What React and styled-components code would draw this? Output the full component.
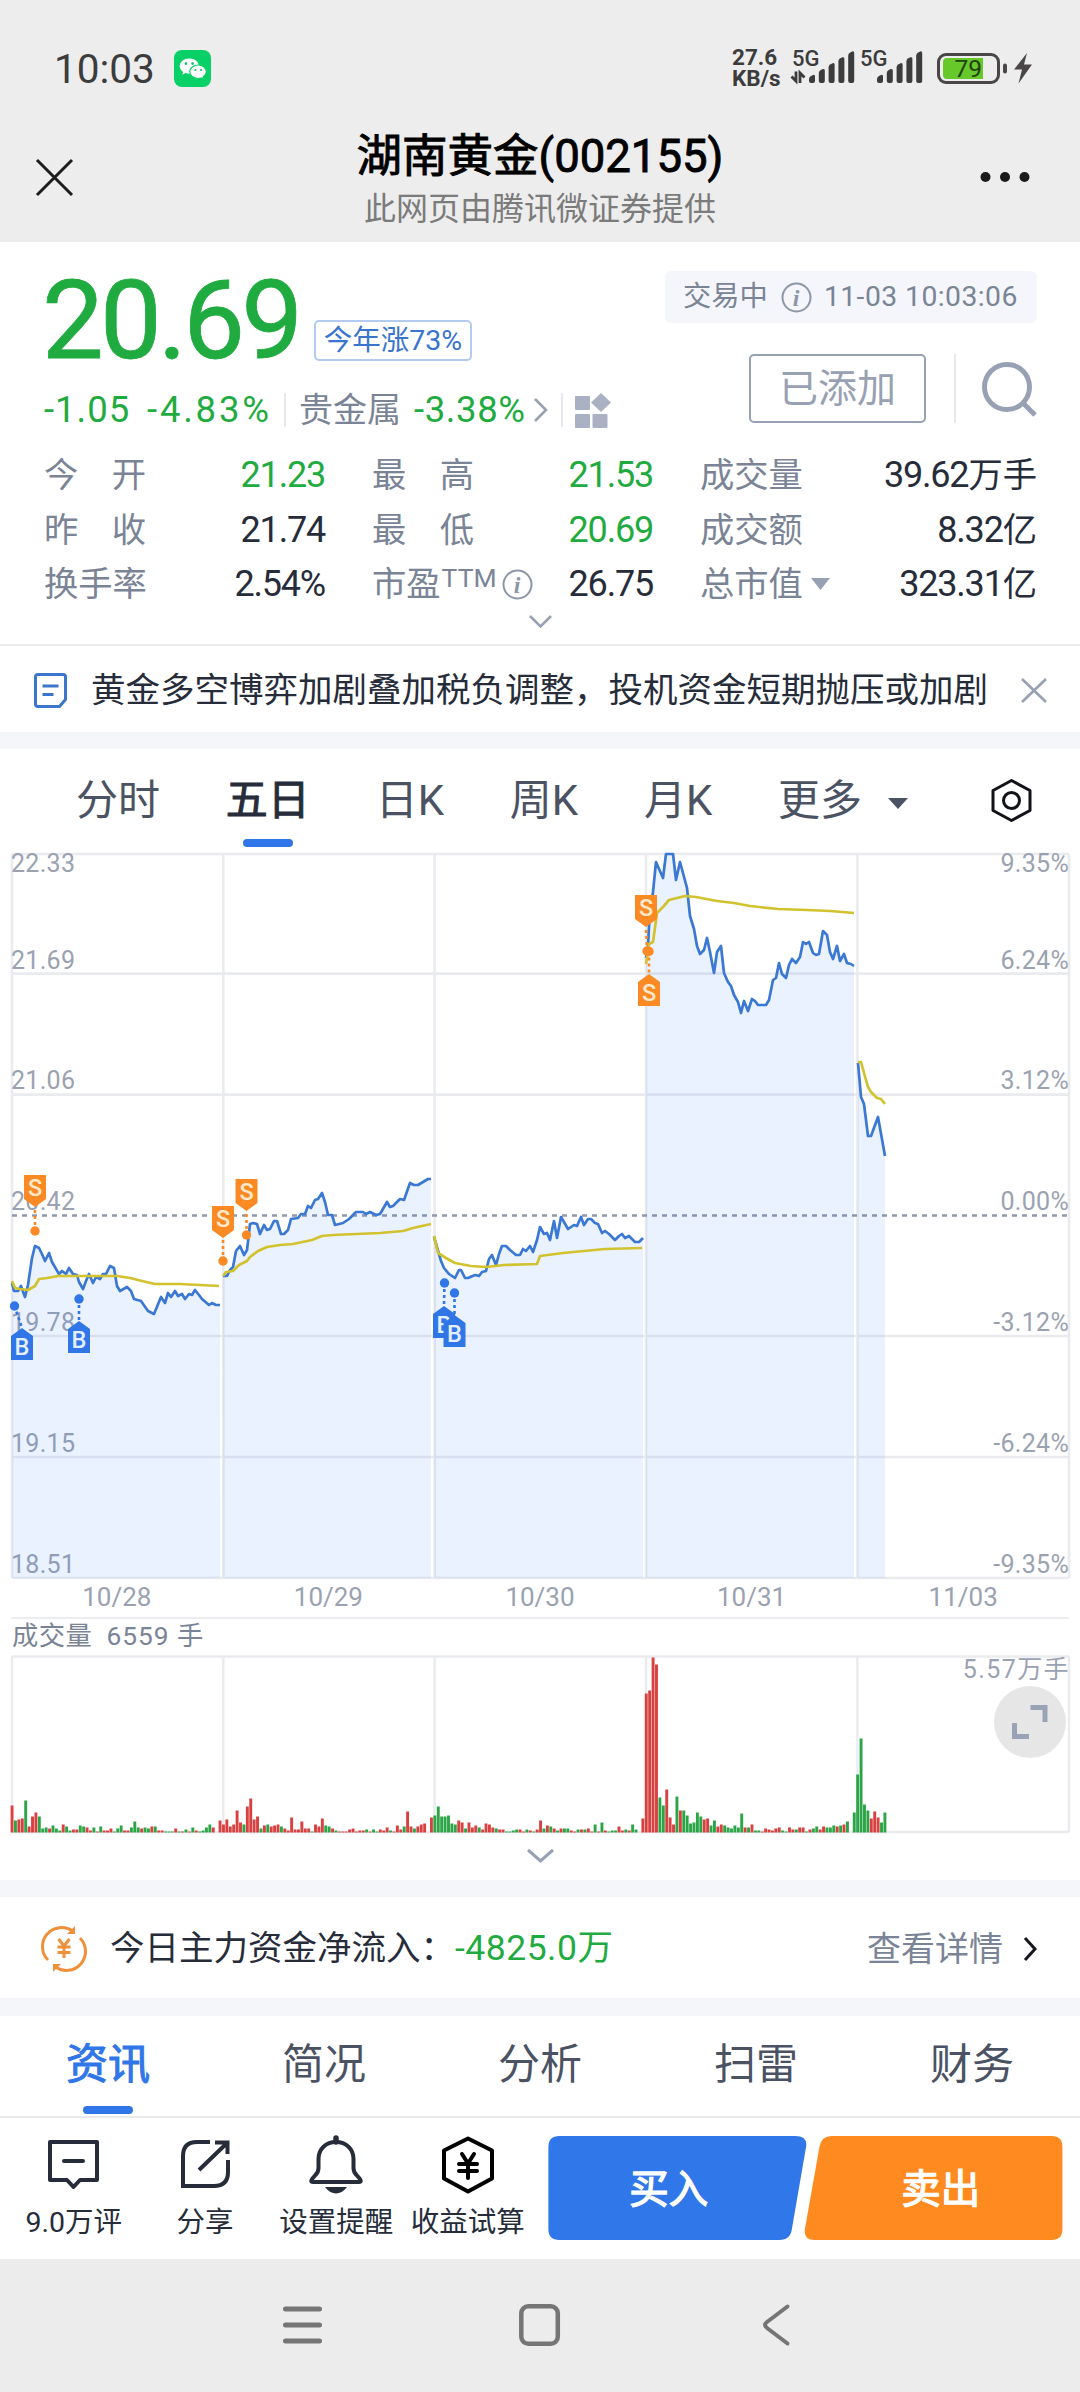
import React from "react";
import styled, { createGlobalStyle } from "styled-components";

const GlobalStyle = createGlobalStyle`
  * {
    box-sizing: border-box;
  }
  body {
    margin: 0;
    background: #fff;
    font-family: Roboto, "Noto Sans CJK SC", sans-serif;
  }
  svg {
    display: block;
    flex: none;
    overflow: visible;
  }
`;

const Screen = styled.div`
  display: flex;
  flex-direction: column;
  width: 1080px;
  height: 2392px;
  overflow: hidden;
  background: #fff;
  color: #262c3a;
  line-height: 1;
  white-space: nowrap;
`;

/* ---------- top of the phone ---------- */

const Top = styled.header`
  height: 242px;
  background: #ededed;
`;
const StatusBar = styled.div`
  display: flex;
  align-items: center;
  height: 133px;
  padding: 3px 47px 0 54px;
`;
const Clock = styled.span`
  width: 120px;
  padding-top: 2px;
  font-size: 40.5px;
  color: #3c3c3c;
`;
const Speed = styled.div`
  width: 58px;
  margin-left: auto;
  font-size: 22.5px;
  font-weight: 700;
  line-height: 21px;
  color: #3c3c3c;
`;
const BatteryWrap = styled.div`
  margin-left: 11px;
`;
const TitleBar = styled.div`
  display: flex;
  justify-content: space-between;
  padding: 0 50px 0 36px;
`;
const TitleSide = styled.div`
  display: flex;
  align-items: center;
  justify-content: ${(props) => (props.$right ? "flex-end" : "flex-start")};
  width: 60px;
  height: 38px;
  margin-top: 25px;
`;
const Titles = styled.div`
  display: flex;
  flex-direction: column;
  align-items: center;
  padding: 2px 0 0 14px;
`;
const Title = styled.h1`
  margin: 0;
  font-size: 45.5px;
  line-height: 44px;
  font-weight: 400;
  -webkit-text-stroke: 0.9px #000;
  color: #000;
`;
const SubTitle = styled.div`
  margin-top: 12px;
  font-size: 32px;
  line-height: 36px;
  color: #7b7b7b;
`;

/* ---------- quote ---------- */

const Quote = styled.section`
  height: 402px;
  padding: 0 43px 0 44px;
`;
const QuoteHead = styled.div`
  display: flex;
  justify-content: space-between;
  height: 205px;
`;
const PriceLine = styled.div`
  display: flex;
  align-items: flex-end;
  height: 119px;
`;
const Price = styled.div`
  width: 270px;
  margin-bottom: 1px;
  font-size: 110px;
  line-height: 78px;
  letter-spacing: -3.8px;
  text-indent: -2px;
  -webkit-text-stroke: 0.8px #1fab3f;
  color: #1fab3f;
`;
const YearBadge = styled.div`
  width: 158px;
  height: 41px;
  border: 2px solid #b3cbee;
  border-radius: 5px;
  font-size: 28.5px;
  line-height: 38px;
  text-align: center;
  color: #3974cf;
`;
const ChangeLine = styled.div`
  display: flex;
  align-items: center;
  height: 36px;
  margin-top: 31px;
  font-size: 36.5px;
  color: #1fab3f;
`;
const Change = styled.span`
  width: ${(props) => props.$width}px;
  letter-spacing: ${(props) => props.$spacing || 0}px;
`;
const Sector = styled.span`
  width: 115px;
  font-size: 34px;
  color: #7a8496;
`;
const Divider = styled.i`
  width: 2px;
  height: ${(props) => props.$height}px;
  margin: ${(props) => props.$margin};
  background: #e6e8ed;
`;
const QuoteSide = styled.div`
  display: flex;
  flex-direction: column;
  align-items: flex-end;
  padding-top: 29px;
`;
const TradeTag = styled.div`
  display: flex;
  align-items: center;
  width: 372px;
  height: 52px;
  padding: 0 18px;
  border-radius: 6px;
  background: #f4f6fb;
  font-size: 28.3px;
  color: #7a8496;
  svg {
    margin: 0 12px 0 13px;
  }
`;
const TradeTime = styled.span`
  letter-spacing: 0.45px;
`;
const Actions = styled.div`
  display: flex;
  align-items: center;
  margin-top: 31px;
`;
const AddedButton = styled.button`
  width: 177px;
  height: 69px;
  padding: 0;
  border: 2px solid #98a1b3;
  border-radius: 5px;
  background: none;
  font-family: inherit;
  font-size: 39px;
  line-height: 60px;
  color: #98a1b3;
`;
const Stats = styled.div`
  display: grid;
  grid-template-columns: 280px 280px 336px;
  grid-auto-rows: 54.5px;
  column-gap: 48px;
  padding-top: 1px;
`;
const Stat = styled.div`
  display: flex;
  align-items: center;
  justify-content: space-between;
`;
const StatLabel = styled.span`
  display: flex;
  align-items: center;
  justify-content: space-between;
  min-width: 102px;
  font-size: 34.3px;
  color: #7a8496;
`;
const StatValue = styled.span`
  font-size: 36px;
  letter-spacing: -1.2px;
  margin-right: -1px;
  color: ${(props) => (props.$down ? "#1fab3f" : "#262c3a")};
  b {
    font-size: 34.3px;
    font-weight: 400;
    letter-spacing: 0;
  }
`;
const Ttm = styled.small`
  margin: 0 5px 13px 1px;
  font-size: 26.5px;
`;
const Expand = styled.div`
  display: flex;
  justify-content: center;
  padding-top: ${(props) => props.$top}px;
  height: ${(props) => props.$height}px;
`;

/* ---------- news line ---------- */

const News = styled.section`
  display: flex;
  align-items: center;
  height: 88px;
  padding: 2px 33px 0 34px;
  border-top: 2px solid #e9ebef;
`;
const NewsText = styled.span`
  flex: 1;
  margin-left: 24px;
  font-size: 34.5px;
`;
const Band = styled.div`
  height: ${(props) => props.$height}px;
  background: #f4f6fa;
`;

/* ---------- period tabs ---------- */

const PeriodTabs = styled.nav`
  display: flex;
  align-items: center;
  gap: 65.8px;
  height: 103px;
  padding: 0 48px 0 76px;
`;
const Period = styled.div`
  position: relative;
  display: flex;
  align-items: center;
  gap: 26px;
  padding-top: 1px;
  font-size: 42px;
  -webkit-text-stroke: ${(props) => (props.$active ? "1px #262c3a" : "0")};
  color: ${(props) => (props.$active ? "#262c3a" : "#4a5263")};
  &:last-of-type {
    margin-right: auto;
  }
`;
const Underline = styled.i`
  position: absolute;
  left: 50%;
  bottom: ${(props) => props.$bottom}px;
  width: 50px;
  height: 8px;
  margin-left: -25px;
  border-radius: 4px;
  background: #3076e8;
`;

/* ---------- charts ---------- */

const ChartArea = styled.section`
  position: relative;
  padding: 0 11px;
`;
const Dates = styled.div`
  display: grid;
  grid-template-columns: repeat(5, 1fr);
  align-items: center;
  height: 40px;
  padding-bottom: 3px;
  border-bottom: 2px solid #ebedf0;
  font-size: 26px;
  text-align: center;
  color: #9aa2b1;
`;
const VolumeHead = styled.div`
  display: flex;
  gap: 14px;
  align-items: center;
  height: 36px;
  padding: 0 0 2px 1px;
  font-size: 26.3px;
  letter-spacing: ${(props) => props.$spacing || 0.5}px;
  color: #7a8496;
`;
const FullButton = styled.button`
  position: absolute;
  right: 14px;
  bottom: 122px;
  display: flex;
  align-items: center;
  justify-content: center;
  width: 72px;
  height: 72px;
  padding: 0;
  border: 0;
  border-radius: 50%;
  background: #e6e6e6;
`;
const AxisText = styled.text`
  font-size: 25px;
  letter-spacing: ${(props) => props.$spacing || 0}px;
  fill: #9aa2b1;
`;

/* ---------- lower part ---------- */

const FundRow = styled.section`
  display: flex;
  align-items: center;
  height: 101px;
  padding: 2px 43px 0 42px;
  font-size: 34.5px;
`;
const FundLabel = styled.span`
  width: 345px;
  margin-left: 24px;
`;
const FundValue = styled.span`
  font-size: 35.5px;
  letter-spacing: 0.5px;
  color: #1fab3f;
`;
const Detail = styled.span`
  display: flex;
  align-items: center;
  gap: 20px;
  margin-left: auto;
  font-size: 34px;
  color: #7a8496;
`;
const InfoTabs = styled.nav`
  display: grid;
  grid-template-columns: repeat(5, 1fr);
  height: 102px;
  border-bottom: 2px solid #e9e9eb;
`;
const InfoTab = styled.div`
  position: relative;
  display: flex;
  align-items: center;
  justify-content: center;
  padding-bottom: 3px;
  font-size: 42px;
  -webkit-text-stroke: ${(props) => (props.$active ? "1px #3076e8" : "0")};
  color: ${(props) => (props.$active ? "#3076e8" : "#4a5263")};
`;
const BottomBar = styled.footer`
  display: flex;
  height: 141px;
  padding: 18px 17px 0 8px;
`;
const Tool = styled.div`
  display: flex;
  flex-direction: column;
  align-items: center;
  width: 131.6px;
  font-size: 28.5px;
  svg {
    margin-bottom: 15px;
  }
`;
const TradeButton = styled.button`
  width: 259px;
  height: 104px;
  padding: ${(props) => (props.$buy ? "0 18px 6px 0" : "0 0 6px 14px")};
  margin-left: ${(props) => (props.$buy ? 15 : -2.5)}px;
  border: 0;
  background: ${(props) => (props.$buy ? "#3077e9" : "#ff8a20")};
  clip-path: path("${(props) =>
    props.$buy
      ? "M11 0H247Q260 0 257.5 12L243.5 93Q242 104 231 104H11Q0 104 0 93V11Q0 0 11 0Z"
      : "M27 0H247Q258 0 258 11V93Q258 104 247 104H10Q-1 104 0.5 93L15 11Q17 0 27 0Z"}");
  font-family: inherit;
  font-size: 39.5px;
  -webkit-text-stroke: 1.3px #fff;
  color: #fff;
`;
const NavBar = styled.div`
  display: flex;
  flex: 1;
  align-items: flex-start;
  padding: 45px 0 0 283px;
  background: #ececec;
`;
const NavItem = styled.div`
  width: ${(props) => props.$width}px;
`;

/* ---------- data ---------- */

const prices = [
  "0,429 2,437 6,437 9,432 13,443 16,431 20,404 23,392 27,394 30,400 33,407 37,399 40,408 47,420 50,417 54,420 57,414 61,420 65,421 67,428 71,435 74,427 77,420 81,429 84,423 88,425 91,420 94,420 98,412 102,414 105,432 108,437 115,433 119,437 122,445 129,447 136,457 142,460 149,443 153,449 156,439 159,443 163,437 166,442 170,440 173,445 177,440 180,441 183,436 187,441 190,445 197,451 200,449 204,451 208,451",
  "211,422 215,422 218,416 221,413 224,397 228,392 232,401 235,396 238,370 241,369 245,370 248,380 252,371 255,376 258,375 262,367 265,367 269,380 272,380 276,376 279,365 286,364 289,360 293,360 296,352 299,354 303,346 306,345 310,339 313,348 316,361 320,361 323,371 331,369 337,365 344,358 351,358 354,360 358,358 364,361 368,360 375,348 378,353 381,352 388,345 392,346 398,329 402,331 406,331 416,325 419,325",
  "422,383 427,400 429,407 432,414 437,420 443,424 447,416 449,416 453,424 456,424 463,421 467,422 470,418 474,417 477,405 480,401 484,411 487,400 490,392 494,392 498,396 504,401 508,401 511,395 514,397 518,392 521,398 525,386 528,373 532,380 535,379 538,386 542,367 545,384 549,363 552,368 556,375 562,371 565,372 569,363 572,371 576,365 579,365 583,369 586,370 590,379 593,377 597,380 603,386 607,382 610,380 613,384 617,382 623,388 627,388 631,384",
  "634,104 636,93 637,72 641,38 644,8 651,24 654,0 661,0 664,26 668,8 675,34 678,62 682,75 685,92 688,100 692,96 695,84 698,98 702,119 705,98 709,92 712,119 716,128 719,132 722,141 726,148 729,159 732,147 736,157 740,145 743,147 746,151 754,151 757,146 761,126 764,124 767,109 770,120 774,124 777,111 780,105 784,109 788,103 791,88 794,90 797,88 801,99 804,101 807,100 811,77 815,81 818,98 821,105 825,92 828,107 832,100 835,109 839,110 842,112",
  "846,209 849,243 852,250 856,282 859,282 866,263 873,302",
];

const averages = [
  "0,427 3,434 8,435 16,436 23,432 27,425 35,424 46,422 65,422 105,422 118,424 130,427 143,430 168,430 188,431 207,432",
  "211,422 214,418 221,417 227,411 235,407 238,403 246,397 255,393 268,391 281,390 300,386 310,382 321,381 368,379 391,377 401,374 419,370",
  "422,382 426,399 434,404 443,409 459,412 474,413 492,411 525,410 528,402 551,399 593,395 630,394",
  "634,110 637,90 641,88 645,59 651,53 657,46 673,42 684,43 705,47 722,49 738,52 766,55 795,56 818,57 842,59",
  "846,208 849,208 852,219 856,233 859,238 865,244 869,245 873,250",
];

// positive = up (red), negative = down (green)
const volumes = [
  [27, -12, 13, 14, -32, 6, 16, 20, -16, -4, -5, 4, -7, -4, -2, 8, -6, -2, 3, 3, -7, -6, 5, 2, -5, 1, -6, 2, 2, 4, -1, -4, -7, 2, 2, -5, -11, -5, 4, -5, -4, 6, -6, 2, 2, -1, -1, -1, 4, -1, 1, -3, 1, -5, 2, -1, -2, -5, -8, 5],
  [12, 8, 13, 6, 8, 22, 10, -8, 26, 34, 13, 16, -4, 7, -8, 6, 7, 8, -6, 4, 2, 15, 3, 3, 11, 4, 4, -1, 8, 6, 14, -7, -6, 4, -2, 1, 1, 1, 3, 4, 1, 2, 2, -3, 1, -3, -1, 3, 2, 5, -2, 1, 7, 3, -6, 21, 6, -4, 6, 8, 9],
  [15, -17, -26, -16, -16, -17, -9, -8, 12, 10, -4, 10, 5, 7, -5, 3, 9, 8, 5, -4, 3, 3, -1, -1, -2, -3, 3, 1, -3, 2, -1, 3, 12, -4, 7, -6, 4, -2, 4, -4, -4, 2, 1, -3, 3, -3, 4, 1, -8, 1, -10, 2, -1, -2, -2, 6, 2, -3, 2, -8, -3],
  [14, 139, 142, 175, 168, -35, -27, 43, 15, 8, -36, 22, -22, -17, -9, -10, -20, -16, 13, 14, -7, -12, 6, 8, -7, -5, -4, -7, -5, -19, 5, -5, 8, -2, -2, 1, 4, 3, 2, 4, 5, -2, -1, 5, 3, -3, 5, 5, -1, 3, -4, -6, 3, 6, -5, -5, -7, 6, -7, 8, -11],
  [-20, -58, -94, -28, -22, 14, 21, 15, -10, -20],
];

const marks = [
  { type: "S", x: 23, tip: 353, dot: [23, 377] },
  { type: "S", x: 211, tip: 384, dot: [211, 407] },
  { type: "S", x: 234.5, tip: 357, dot: [234.5, 381] },
  { type: "S", x: 634, tip: 73, dot: [635, 97] },
  { type: "S", x: 637, tip: 120, up: true, dot: [637, 97.5] },
  { type: "B", x: 10, tip: 474, up: true, dot: [2.5, 452] },
  { type: "B", x: 67, tip: 467, up: true, dot: [67, 445] },
  { type: "B", x: 432, tip: 452, up: true, dot: [432.5, 429] },
  { type: "B", x: 442.5, tip: 461, up: true, dot: [442.5, 439] },
];

const axis = [
  ["22.33", "9.35%", 18],
  ["21.69", "6.24%", 115],
  ["21.06", "3.12%", 235],
  ["20.42", "0.00%", 356],
  ["19.78", "-3.12%", 477],
  ["19.15", "-6.24%", 598],
  ["18.51", "-9.35%", 719],
];

const dayX = [0, 211.3, 422.6, 634, 845.4, 1057];
const days = ["10/28", "10/29", "10/30", "10/31", "11/03"];

const stats = [
  { label: ["今", "开"], value: "21.23", down: true },
  { label: ["最", "高"], value: "21.53", down: true },
  { label: ["成交量"], value: "39.62", unit: "万手" },
  { label: ["昨", "收"], value: "21.74" },
  { label: ["最", "低"], value: "20.69", down: true },
  { label: ["成交额"], value: "8.32", unit: "亿" },
  { label: ["换手率"], value: "2.54%" },
  { label: ["市盈"], value: "26.75", ttm: true },
  { label: ["总市值"], value: "323.31", unit: "亿", more: true },
];

/* ---------- icons ---------- */

const WechatIcon = () => (
  <svg width="37" height="37" viewBox="0 0 37 37">
    <rect width="37" height="37" rx="8" fill="#07d166" />
    <path d="M15.3 8.4c-5.4 0-9.6 3.4-9.6 7.7 0 2.4 1.3 4.5 3.4 5.9l-.9 2.7 3.2-1.6c1.2.4 2.5.6 3.9.6 5.4 0 9.6-3.3 9.6-7.6s-4.2-7.7-9.6-7.7z" fill="#fff" />
    <path d="M24.2 15c-4.800 0-8.400 3-8.400 6.800s3.600 6.700 8.400 6.700c1 0 2.100-.2 3-.5l2.600 1.400-.7-2.300c2-1.300 3.300-3.200 3.300-5.300 0-3.800-3.600-6.800-8.200-6.800z" fill="#fff" stroke="#07d166" strokeWidth="1.2" />
    <g fill="#07c160">
      <circle cx="12" cy="13.6" r="1.3" />
      <circle cx="18.6" cy="13.6" r="1.3" />
      <circle cx="21.5" cy="20" r="1.1" />
      <circle cx="27" cy="20" r="1.1" />
    </g>
  </svg>
);

const Signal = ({ arrows }) => (
  <svg width="68" height="40" viewBox="0 0 68 40" fill="#3c3c3c">
    <text x="2" y="17.5" fontSize="22" fontWeight="500" fontFamily="Roboto">5G</text>
    {[0, 1, 2, 3, 4].map((i) => (
      <path key={i} d={`M${19 + i * 9.8} ${31 - i * 5.9}q0-2 2-3l2-1q2-.6 2 1.5V33q0 2-2 2h-2q-2 0-2-2z`} />
    ))}
    {arrows && (
      <g stroke="#3c3c3c" strokeWidth="2.8" fill="none">
        <path d="M6 23.5v9.5l-4.500-4.500" />
        <path d="M10 35v-10l4.500 4.500" />
      </g>
    )}
  </svg>
);

const Battery = () => (
  <svg width="96" height="32" viewBox="0 0 96 32">
    <rect x="1.5" y="2.5" width="60" height="28" rx="7.5" fill="none" stroke="#4a4646" strokeWidth="3" />
    <path d="M6 10q0-4 4-4h36v21H10q-4 0-4-4z" fill="#66c829" />
    <text x="17.5" y="25" fontSize="24.5" fontFamily="Roboto" fill="#23420f">79</text>
    <rect x="66" y="11.5" width="4" height="10" rx="2" fill="#4a4646" />
    <path d="M90 1L77 17.500h8l-3.500 14L95 12.500h-8z" fill="#4a4646" />
  </svg>
);

const Info = () => (
  <svg width="31" height="31" viewBox="0 0 31 31">
    <circle cx="15.5" cy="15.5" r="14" fill="none" stroke="#8d96a8" strokeWidth="2" />
    <text x="15" y="23.5" textAnchor="middle" fontSize="24" fontStyle="italic" fontWeight="700" fontFamily="Liberation Serif" fill="#8d96a8">i</text>
  </svg>
);

const Chevron = ({ d, width, height, color = "#98a1b3", stroke = 2.6 }) => (
  <svg width={width} height={height} viewBox={`0 0 ${width} ${height}`}>
    <path d={d} fill="none" stroke={color} strokeWidth={stroke} />
  </svg>
);

const Mark = ({ type, x, tip, up, dot }) => {
  const color = type === "S" ? "#fb8a25" : "#3076e6";
  const dir = up ? 1 : -1;
  return (
    <g>
      <line x1={dot[0]} y1={dot[1]} x2={x} y2={tip} stroke={color} strokeWidth="2.6" strokeDasharray="3 3" />
      <circle cx={dot[0]} cy={dot[1]} r="4.7" fill={color} />
      <path d={`M${x} ${tip}l-11 ${8 * dir}v${24 * dir}h22v${-24 * dir}z`} fill={color} />
      <text x={x} y={tip + 19 * dir + 8} textAnchor="middle" fontSize="23.5" fontWeight="500" fill={type === "S" ? "#ffe9ca" : "#e3eeff"}>
        {type}
      </text>
    </g>
  );
};

/* ---------- charts ---------- */

const PriceChart = () => (
  <svg width="1058" height="727" viewBox="-1 -2 1058 727">
    <g stroke="#e9ebef" strokeWidth="2.6">
      {[0, 119.6, 240.6, 482, 603, 724].map((y) => (
        <line key={y} x1="0" x2="1057" y1={y} y2={y} />
      ))}
      {dayX.map((x) => (
        <line key={x} x1={x} x2={x} y1="0" y2="724" />
      ))}
    </g>
    {axis.map(([price, rate, y]) => (
      <g key={price}>
        <AxisText x="-1" y={y} $spacing={0.3}>{price}</AxisText>
        <AxisText x="1057" y={y} textAnchor="end" $spacing={0.3}>{rate}</AxisText>
      </g>
    ))}
    <line x1="0" x2="1057" y1="361.5" y2="361.5" stroke="#9098ab" strokeWidth="2.6" strokeDasharray="5 5" />
    {prices.map((points, i) => {
      const last = points.split(" ").pop().split(",")[0];
      return (
        <g key={i} strokeLinejoin="round">
          <polygon points={`${dayX[i]},724 ${points} ${last},724`} fill="#2f7aff" fillOpacity="0.095" />
          <polyline points={points} fill="none" stroke="#3a78d4" strokeWidth="2.7" />
          <polyline points={averages[i]} fill="none" stroke="#d2c22e" strokeWidth="2.7" />
        </g>
      );
    })}
    {marks.map((mark, i) => (
      <Mark key={i} {...mark} />
    ))}
  </svg>
);

const VolumeChart = () => (
  <svg width="1058" height="179" viewBox="-1 -1 1058 179">
    <g stroke="#e9ebef" strokeWidth="2.4">
      <line x1="0" x2="1057" y1="0.5" y2="0.5" />
      <line x1="0" x2="1057" y1="176" y2="176" />
      {dayX.map((x) => (
        <line key={x} x1={x} x2={x} y1="0" y2="176" />
      ))}
    </g>
    {volumes.map((day, d) =>
      day.map((v, i) => (
        <rect
          key={`${d}-${i}`}
          x={d * 211.4 + (i - (d ? 1 : 0)) * 3.41 - 1.4}
          y={176.5 - Math.abs(v)}
          width="2.9"
          height={Math.abs(v)}
          fill={v > 0 ? "#d94040" : "#2ba545"}
        />
      ))
    )}
    <AxisText x="1058" y="21.5" textAnchor="end" $spacing={1.4}>5.57万手</AxisText>
  </svg>
);

const App = () => {
  return (
    <Screen>
      <GlobalStyle />
      <Top>
        <StatusBar>
          <Clock>10:03</Clock>
          <WechatIcon />
          <Speed>
            27.6
            <br />
            KB/s
          </Speed>
          <Signal arrows />
          <Signal />
          <BatteryWrap>
            <Battery />
          </BatteryWrap>
        </StatusBar>
        <TitleBar>
          <TitleSide>
            <Chevron width={37} height={37} d="M1 1L36 36M36 1L1 36" color="#1c1c1e" stroke={3} />
          </TitleSide>
          <Titles>
            <Title>湖南黄金(002155)</Title>
            <SubTitle>此网页由腾讯微证券提供</SubTitle>
          </Titles>
          <TitleSide $right>
            <svg width="50" height="10" viewBox="0 0 50 10" fill="#1a1a1a">
              <circle cx="5.5" cy="5" r="5" />
              <circle cx="25" cy="5" r="5" />
              <circle cx="44.5" cy="5" r="5" />
            </svg>
          </TitleSide>
        </TitleBar>
      </Top>

      <Quote>
        <QuoteHead>
          <div>
            <PriceLine>
              <Price>20.69</Price>
              <YearBadge>今年涨73%</YearBadge>
            </PriceLine>
            <ChangeLine>
              <Change $width={103} $spacing={1}>-1.05</Change>
              <Change $width={137} $spacing={2.8}>-4.83%</Change>
              <Divider $height={34} $margin="0 13px 0 0" />
              <Sector>贵金属</Sector>
              <Change $width={119} $spacing={0.6}>-3.38%</Change>
              <Chevron width={16} height={24} d="M2 1L13 12L2 23" />
              <Divider $height={34} $margin="0 12px 0 12px" />
              <svg width="36" height="35" viewBox="0 0 36 35" fill="#a9b1c2">
                <rect y="3" width="15" height="14" rx="1" />
                <rect y="21" width="15" height="14" rx="1" />
                <rect x="17.5" y="21" width="15" height="14" rx="1" />
                <path d="M26 0L36 9.5L26 19L16 9.5Z" />
              </svg>
            </ChangeLine>
          </div>
          <QuoteSide>
            <TradeTag>
              交易中
              <Info />
              <TradeTime>11-03 10:03:06</TradeTime>
            </TradeTag>
            <Actions>
              <AddedButton>已添加</AddedButton>
              <Divider $height={69} $margin="0 26px 0 28px" />
              <svg width="55" height="55" viewBox="0 0 55 55" fill="none" stroke="#98a1b3" strokeWidth="5">
                <circle cx="25" cy="26" r="22.5" />
                <path d="M41 42L53 54" />
              </svg>
            </Actions>
          </QuoteSide>
        </QuoteHead>
        <Stats>
          {stats.map((item) => (
            <Stat key={item.label.join("")}>
              <StatLabel>
                {item.label.map((word) => (
                  <span key={word}>{word}</span>
                ))}
                {item.ttm && <Ttm>TTM</Ttm>}
                {item.ttm && <Info />}
                {item.more && (
                  <svg width="27" height="12" viewBox="0 0 27 12">
                    <path d="M8 0H27L17.5 12Z" fill="#98a1b3" />
                  </svg>
                )}
              </StatLabel>
              <StatValue $down={item.down}>
                {item.value}
                {item.unit && <b>{item.unit}</b>}
              </StatValue>
            </Stat>
          ))}
        </Stats>
        <Expand $top={3} $height={29}>
          <Chevron width={23} height={13} d="M1 1L11.5 11.5L22 1" />
        </Expand>
      </Quote>

      <News>
        <svg width="33" height="35" viewBox="0 0 33 35" fill="none" stroke="#3c76cc" strokeWidth="3">
          <path d="M4 1.5H29q2.500 0 2.500 2.500V26.500L25.500 33.500H4q-2.500 0-2.500-2.500V4q0-2.500 2.500-2.500z" strokeLinejoin="round" />
          <path d="M8.500 13H24.500M8.500 21.500H19.500" />
        </svg>
        <NewsText>黄金多空博弈加剧叠加税负调整，投机资金短期抛压或加剧</NewsText>
        <Chevron width={26} height={25} d="M1 1L25 24M25 1L1 24" />
      </News>
      <Band $height={17} />

      <PeriodTabs>
        <Period>分时</Period>
        <Period $active>
          五日
          <Underline $bottom={-25} />
        </Period>
        <Period>日K</Period>
        <Period>周K</Period>
        <Period>月K</Period>
        <Period>
          更多
          <svg width="20" height="11" viewBox="0 0 20 11">
            <path d="M0 2H20L10 13Z" fill="#4a5263" />
          </svg>
        </Period>
        <svg width="41" height="43" viewBox="0 0 41 43" fill="none" stroke="#111318" strokeWidth="3" strokeLinejoin="round">
          <path d="M20.5 1.5L39 11.5V31.5L20.5 41.5L2 31.5V11.5Z" />
          <circle cx="20.5" cy="21.5" r="8" />
        </svg>
      </PeriodTabs>

      <ChartArea>
        <PriceChart />
        <Dates>
          {days.map((day) => (
            <span key={day}>{day}</span>
          ))}
        </Dates>
        <VolumeHead>
          <span>成交量</span>
          <VolumeValue>6559 手</VolumeValue>
        </VolumeHead>
        <VolumeChart />
        <Expand $top={15} $height={46}>
          <Chevron width={27} height={14} d="M1 1L13.5 12L26 1" stroke={3} />
        </Expand>
        <FullButton>
          <svg width="36" height="36" viewBox="0 0 36 36" fill="none" stroke="#9aa3b5" strokeWidth="5">
            <path d="M18.5 3.5H33V18M17 32.5H2.5V19" />
          </svg>
        </FullButton>
      </ChartArea>
      <Band $height={17} />

      <FundRow>
        <svg width="44" height="46" viewBox="0 0 44 46" fill="none" stroke="#ef913a" strokeWidth="3">
          <path d="M6 34A19 19 0 0 1 31 5.5" />
          <path d="M38 12A19 19 0 0 1 13 40.5" />
          <path d="M33 0V8H25zM11 46V38H19z" fill="#ef913a" stroke="none" />
          <path d="M16.500 13L22 20L27.500 13M22 20V32M15.500 21H28.500M15.500 26.500H28.500" strokeWidth="3" />
        </svg>
        <FundLabel>今日主力资金净流入：</FundLabel>
        <FundValue>-4825.0万</FundValue>
        <Detail>
          查看详情
          <Chevron width={14} height={24} d="M2 1L12 12L2 23" color="#15171c" stroke={3} />
        </Detail>
      </FundRow>
      <Band $height={18} />

      <InfoTabs>
        <InfoTab $active>
          资讯
          <Underline $bottom={2} />
        </InfoTab>
        <InfoTab>简况</InfoTab>
        <InfoTab>分析</InfoTab>
        <InfoTab>扫雷</InfoTab>
        <InfoTab>财务</InfoTab>
      </InfoTabs>

      <BottomBar>
        <Tool>
          <svg width="51" height="58" viewBox="0 0 51 58" fill="none" stroke="#262c3a" strokeWidth="4" strokeLinejoin="round" strokeLinecap="round">
            <path d="M2 6H49V44H32L25.5 51L19 44H2Z" />
            <path d="M16 25H35" />
          </svg>
          9.0万评
        </Tool>
        <Tool>
          <svg width="49" height="58" viewBox="0 0 49 58" fill="none" stroke="#262c3a" strokeWidth="4">
            <path d="M29 6H16Q2 6 2 20V50H33Q47 50 47 36V24" />
            <path d="M18 34L45 8M34 6.5H46.500V18" />
          </svg>
          分享
        </Tool>
        <Tool>
          <svg width="54" height="58" viewBox="0 0 54 58" fill="none" stroke="#262c3a" strokeWidth="4" strokeLinejoin="round">
            <path d="M27 6C17 6 9.5 13 9.5 23V32Q9.5 36 6.5 39L3 43Q1 46 4 46H50Q53 46 51 43L47.5 39Q44.5 36 44.5 32V23C44.5 13 37 6 27 6Z" />
            <path d="M27 2V6" strokeWidth="5.5" strokeLinecap="round" />
            <path d="M16 51H38Q33 57.500 27 57.500T16 51Z" fill="#262c3a" stroke="none" />
          </svg>
          设置提醒
        </Tool>
        <Tool>
          <svg width="52" height="58" viewBox="0 0 52 58" fill="none" stroke="#000" strokeWidth="4" strokeLinejoin="round" strokeLinecap="round">
            <path d="M26 2.5L50 14.5V42.5L26 55.5L2 42.5V14.5Z" />
            <path d="M20 18L26 27.5L32 18M26 27.5V42M17 28H35M17 35H35" />
          </svg>
          收益试算
        </Tool>
        <TradeButton $buy>买入</TradeButton>
        <TradeButton>卖出</TradeButton>
      </BottomBar>

      <NavBar>
        <NavItem $width={236}>
          <svg width="39" height="42" viewBox="0 0 39 42" stroke="#757575" strokeWidth="5" strokeLinecap="round">
            <path d="M2.5 5H36.5M2.5 21H36.5M2.5 37H36.5" />
          </svg>
        </NavItem>
        <NavItem $width={244}>
          <svg width="41" height="42" viewBox="0 0 41 42" fill="none" stroke="#757575" strokeWidth="4.5">
            <rect x="2.3" y="2.3" width="36.5" height="37.5" rx="7" />
          </svg>
        </NavItem>
        <svg width="27" height="42" viewBox="0 0 27 42" fill="none" stroke="#757575" strokeWidth="4" strokeLinecap="round">
          <path d="M24.5 2.5L4 18Q0 21 4 24L24.5 39.5" />
        </svg>
      </NavBar>
    </Screen>
  );
};

const VolumeValue = styled.span`
  letter-spacing: 1px;
`;

export default App;
